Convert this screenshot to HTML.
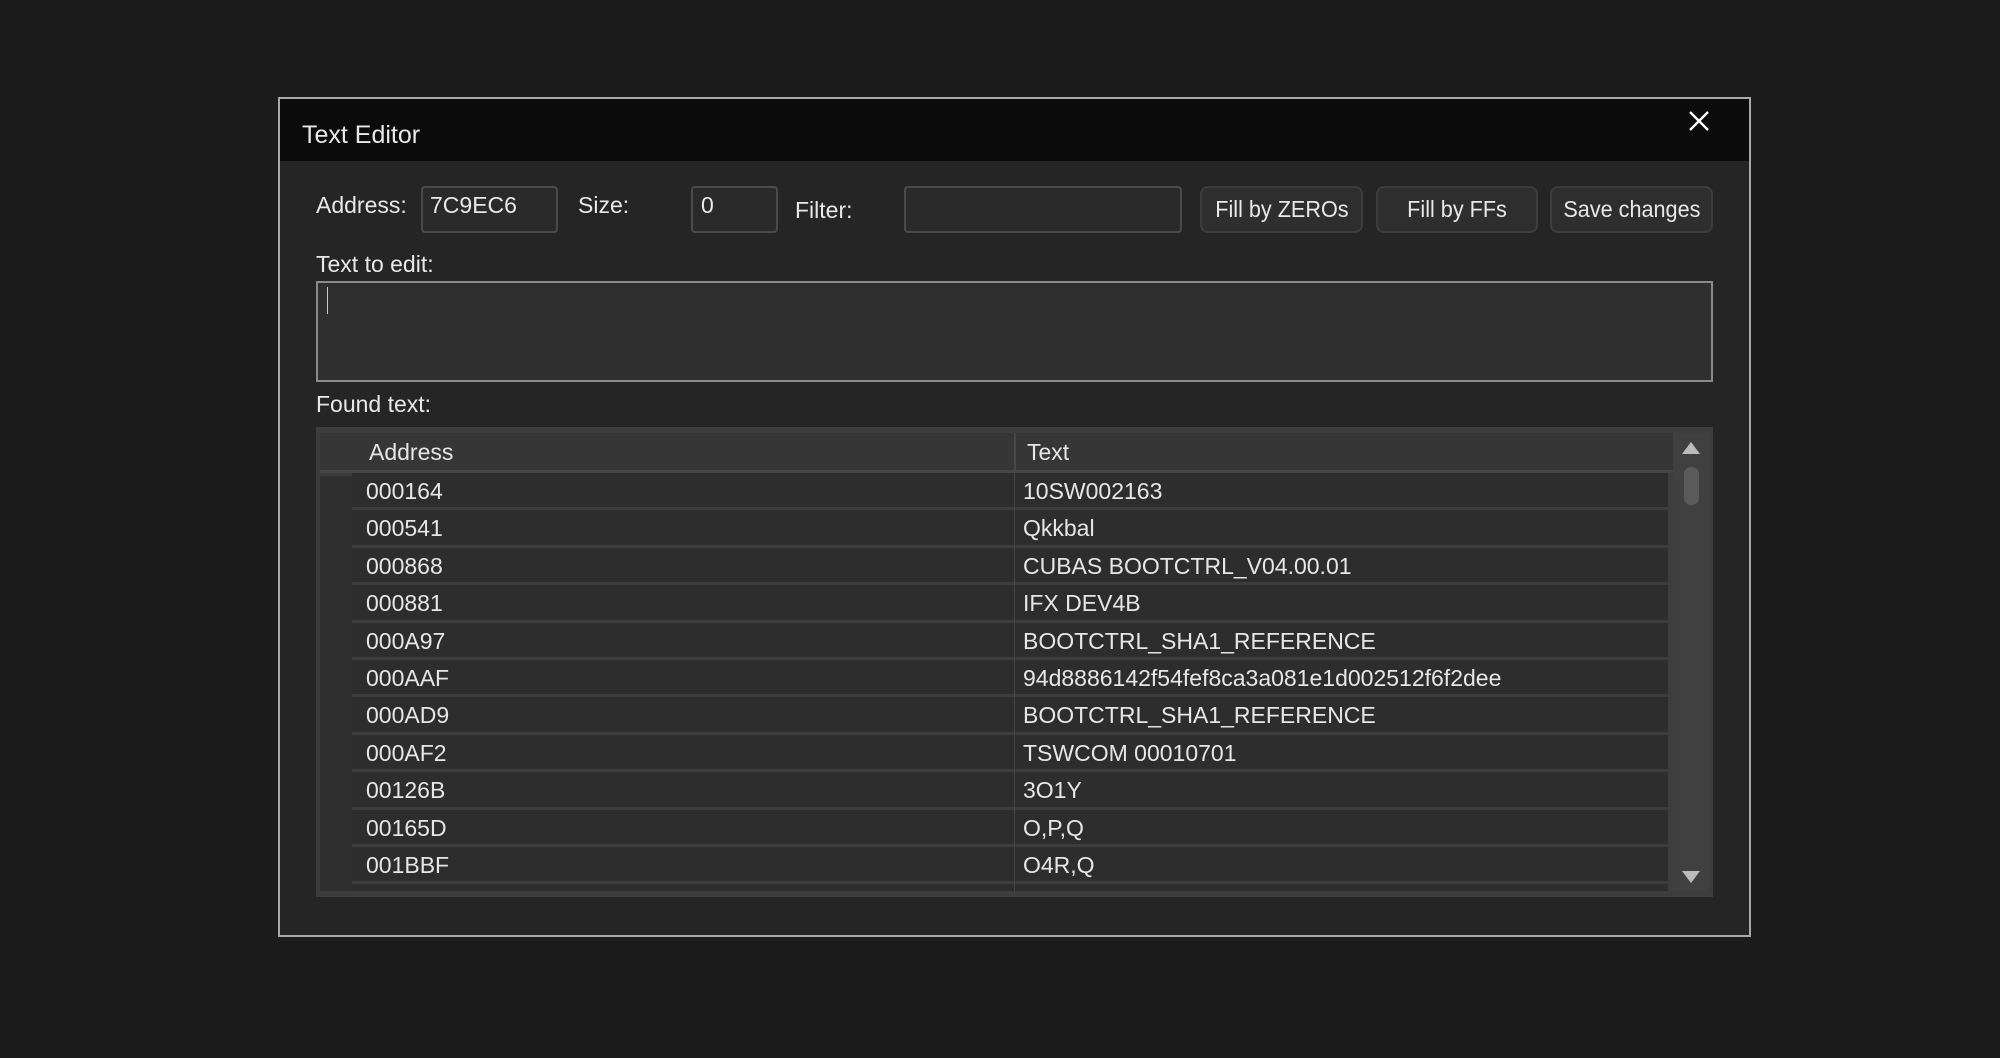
<!DOCTYPE html>
<html><head><meta charset="utf-8"><style>
*{box-sizing:border-box;margin:0;padding:0}
body{width:2000px;height:1058px;background:#1c1c1c;position:relative;overflow:hidden;font-family:"Liberation Sans",sans-serif;color:#e6e6e6}
.a{position:absolute}
#dlg{left:278px;top:97px;width:1473px;height:840px;background:#252525;border:2px solid #a8a8a8}
#title{left:0;top:0;width:100%;height:62px;background:#0b0b0b}
.lbl{font-size:23px;color:#e8e8e8;white-space:nowrap}
.inp{background:#2a2a2a;border:2px solid #4a4a4a;border-radius:4px}
.btn{background:#2e2e2e;border:2px solid #3c3c3c;border-radius:8px;font-size:23px;text-align:center;line-height:42px;color:#e8e8e8}
.btn span{display:inline-block;transform:scaleX(0.94)}
#tbl{left:316px;top:427px;width:1397px;height:470px;background:#3d3d3d;overflow:hidden}
.row{position:absolute;left:36px;width:1316px;height:37.4px;background:#2d2d2d;border-bottom:3px solid #3c3c3c;font-size:23px;line-height:36px}
.row span{position:absolute}
</style></head><body>
<div id="dlg" class="a">
 <div id="title" class="a"></div>
 <div class="a lbl" style="left:22px;top:22px;font-size:25px">Text Editor</div>
 <svg class="a" style="left:1408px;top:11px" width="22" height="22"><path d="M2 2L20 20M20 2L2 20" stroke="#fff" stroke-width="2.4"/></svg>
</div>
<div class="a lbl" style="left:316px;top:192px">Address:</div>
<div class="a inp" style="left:421px;top:186px;width:137px;height:47px"></div>
<div class="a lbl" style="left:430px;top:192px">7C9EC6</div>
<div class="a lbl" style="left:578px;top:192px">Size:</div>
<div class="a inp" style="left:691px;top:186px;width:87px;height:47px"></div>
<div class="a lbl" style="left:701px;top:192px">0</div>
<div class="a lbl" style="left:795px;top:197px">Filter:</div>
<div class="a inp" style="left:904px;top:186px;width:278px;height:47px"></div>
<div class="a btn" style="left:1200px;top:186px;width:163px;height:47px"><span>Fill by ZEROs</span></div>
<div class="a btn" style="left:1376px;top:186px;width:162px;height:47px"><span>Fill by FFs</span></div>
<div class="a btn" style="left:1550px;top:186px;width:163px;height:47px"><span>Save changes</span></div>
<div class="a lbl" style="left:316px;top:251px">Text to edit:</div>
<div class="a" style="left:316px;top:281px;width:1397px;height:101px;background:#2f2f2f;border:2px solid #8a8a8a"></div>
<div class="a" style="left:327px;top:287px;width:1px;height:27px;background:#ccc"></div>
<div class="a lbl" style="left:316px;top:391px">Found text:</div>
<div id="tbl" class="a">
 <div class="a" style="left:4px;top:6px;width:1353px;height:40px;background:#363636;border-bottom:3px solid #454545"></div>
 <div class="a" style="left:698px;top:6px;width:2px;height:40px;background:#484848"></div>
 <div class="a" style="left:53px;top:12px;font-size:23px">Address</div>
 <div class="a" style="left:711px;top:12px;font-size:23px">Text</div>
 <div class="a" style="left:4px;top:49px;width:32px;height:420px;background:#2f2f2f"></div>
 <div class="a" style="left:1357px;top:6px;width:36px;height:458px;background:#404040"></div>
 <svg class="a" style="left:1365px;top:14px" width="20" height="14"><path d="M10 1L19 13H1Z" fill="#bbb"/></svg>
 <svg class="a" style="left:1365px;top:443px" width="20" height="14"><path d="M1 1H19L10 13Z" fill="#bbb"/></svg>
 <div class="a" style="left:1368px;top:40px;width:15px;height:38px;background:#5a5a5a;border-radius:7px"></div>
 <div class="a" style="left:0;top:464px;width:1397px;height:6px;background:#3d3d3d"></div>
</div>
<div class="a" style="left:316px;top:427px;width:1397px;height:470px;overflow:hidden">
 <div class="a" style="left:0;top:0;width:1352px;height:464px;overflow:hidden">
 <div class="row" style="top:46px"><span style="left:14px">000164</span><span style="left:671px">10SW002163</span></div>
 <div class="row" style="top:83.4px"><span style="left:14px">000541</span><span style="left:671px">Qkkbal</span></div>
 <div class="row" style="top:120.8px"><span style="left:14px">000868</span><span style="left:671px">CUBAS BOOTCTRL_V04.00.01</span></div>
 <div class="row" style="top:158.2px"><span style="left:14px">000881</span><span style="left:671px">IFX DEV4B</span></div>
 <div class="row" style="top:195.6px"><span style="left:14px">000A97</span><span style="left:671px">BOOTCTRL_SHA1_REFERENCE</span></div>
 <div class="row" style="top:233px"><span style="left:14px">000AAF</span><span style="left:671px">94d8886142f54fef8ca3a081e1d002512f6f2dee</span></div>
 <div class="row" style="top:270.4px"><span style="left:14px">000AD9</span><span style="left:671px">BOOTCTRL_SHA1_REFERENCE</span></div>
 <div class="row" style="top:307.8px"><span style="left:14px">000AF2</span><span style="left:671px">TSWCOM 00010701</span></div>
 <div class="row" style="top:345.2px"><span style="left:14px">00126B</span><span style="left:671px">3O1Y</span></div>
 <div class="row" style="top:382.6px"><span style="left:14px">00165D</span><span style="left:671px">O,P,Q</span></div>
 <div class="row" style="top:420px"><span style="left:14px">001BBF</span><span style="left:671px">O4R,Q</span></div>
 <div class="row" style="top:457.4px"><span style="left:14px;top:0">001A1F</span><span style="left:671px;top:0">0,00</span></div>
 </div>
 <div class="a" style="left:698px;top:46px;width:1px;height:418px;background:#444"></div>
</div>
</body></html>
